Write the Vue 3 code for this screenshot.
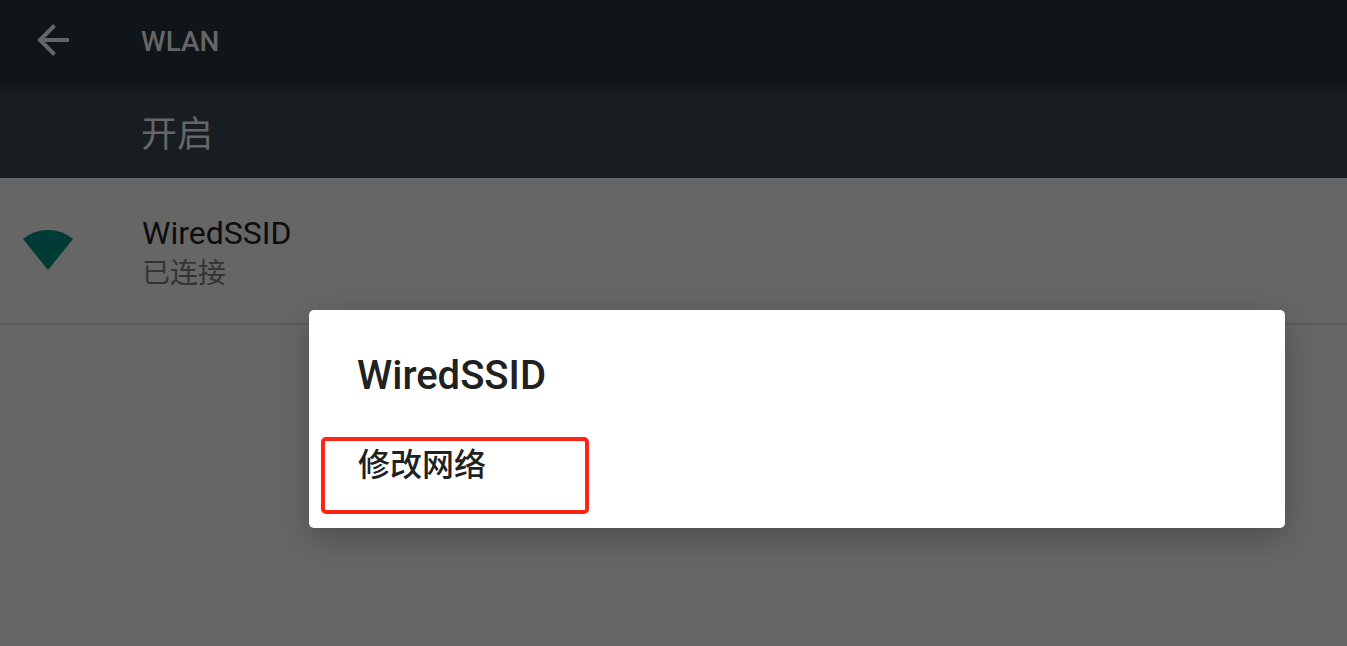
<script setup>
import { ref } from 'vue'

const networks = ref([{ name: 'WiredSSID', status: '已连接' }])
const actions = ref(['修改网络'])
</script>

<template>
  <div class="screen">
    <header class="app-bar">
      <button class="back" type="button" aria-label="返回">
        <svg width="34" height="34" viewBox="0 0 34 34" aria-hidden="true">
          <path d="M18.5 2.5 4 17 18.5 31.5M4 17H33" fill="none" stroke="currentColor" stroke-width="4" />
        </svg>
      </button>
      <h1 class="page-title">WLAN</h1>
    </header>

    <div class="switch-bar">开启</div>

    <ul class="networks">
      <li v-for="network in networks" :key="network.name" class="network">
        <svg class="signal" width="52" height="42" viewBox="0 0 52 42" aria-hidden="true">
          <path d="M1 9Q12 0 26 0T51 9L26 40Z" fill="currentColor" />
        </svg>
        <div>
          <div class="network-name">{{ network.name }}</div>
          <div class="network-status">{{ network.status }}</div>
        </div>
      </li>
    </ul>

    <section class="dialog" role="dialog" aria-labelledby="dialog-title">
      <h2 id="dialog-title" class="dialog-title">WiredSSID</h2>
      <button v-for="action in actions" :key="action" class="action" type="button">{{ action }}</button>
    </section>
  </div>
</template>

<style>
body {
  background: #666;
}
</style>

<style scoped>
.screen {
  position: relative;
  min-height: 100vh;
  overflow: hidden;
  background: #666;
  color: #666;
  font-family: Roboto, "Noto Sans CJK SC", sans-serif;
}

.app-bar {
  display: flex;
  align-items: center;
  height: 86px;
  padding: 0 36px;
  box-sizing: border-box;
  background: #0f1518;
  position: relative;
  box-shadow: 0 2px 6px rgba(0, 0, 0, 0.3);
}

.back {
  display: flex;
  width: 105px;
  padding: 0;
  margin-bottom: 6px;
  border: 0;
  background: none;
  color: inherit;
}

.page-title {
  margin: 0;
  font-size: 28px;
  line-height: 32px;
  font-weight: 500;
  margin-bottom: 2px;
}

.switch-bar {
  display: flex;
  align-items: center;
  height: 92px;
  padding: 0 141px 2px;
  box-sizing: border-box;
  background: #181d21;
  font-size: 36px;
}

.networks {
  margin: 0;
  padding: 0;
  list-style: none;
}

.network {
  display: flex;
  align-items: center;
  height: 147px;
  padding-left: 22px;
  box-sizing: border-box;
  border-bottom: 2px solid #5a5a5a;
}

.signal {
  width: 52px;
  margin-right: 68px;
  color: #003c35;
}

.network-name {
  padding-top: 6px;
  font-size: 32px;
  line-height: 40px;
  color: #0d0d0d;
}

.network-status {
  font-size: 28px;
  line-height: 42px;
  color: #333;
}

.dialog {
  position: absolute;
  top: 310px;
  left: 309px;
  right: 62px;
  padding: 41px 12px 14px;
  border-radius: 5px;
  background: #fff;
  color: #212121;
  box-shadow: 0 10px 32px rgba(0, 0, 0, 0.24);
}

.dialog-title {
  margin: 0 36px 36px;
  font-size: 40px;
  line-height: 50px;
  font-weight: 500;
}

.action {
  display: block;
  width: 268px;
  height: 77px;
  padding: 0 33px 22px;
  border: 4px solid #ff2414;
  border-radius: 5px;
  background: none;
  color: inherit;
  font: inherit;
  font-size: 32px;
  font-weight: 500;
  line-height: 46px;
  text-align: left;
}
</style>
